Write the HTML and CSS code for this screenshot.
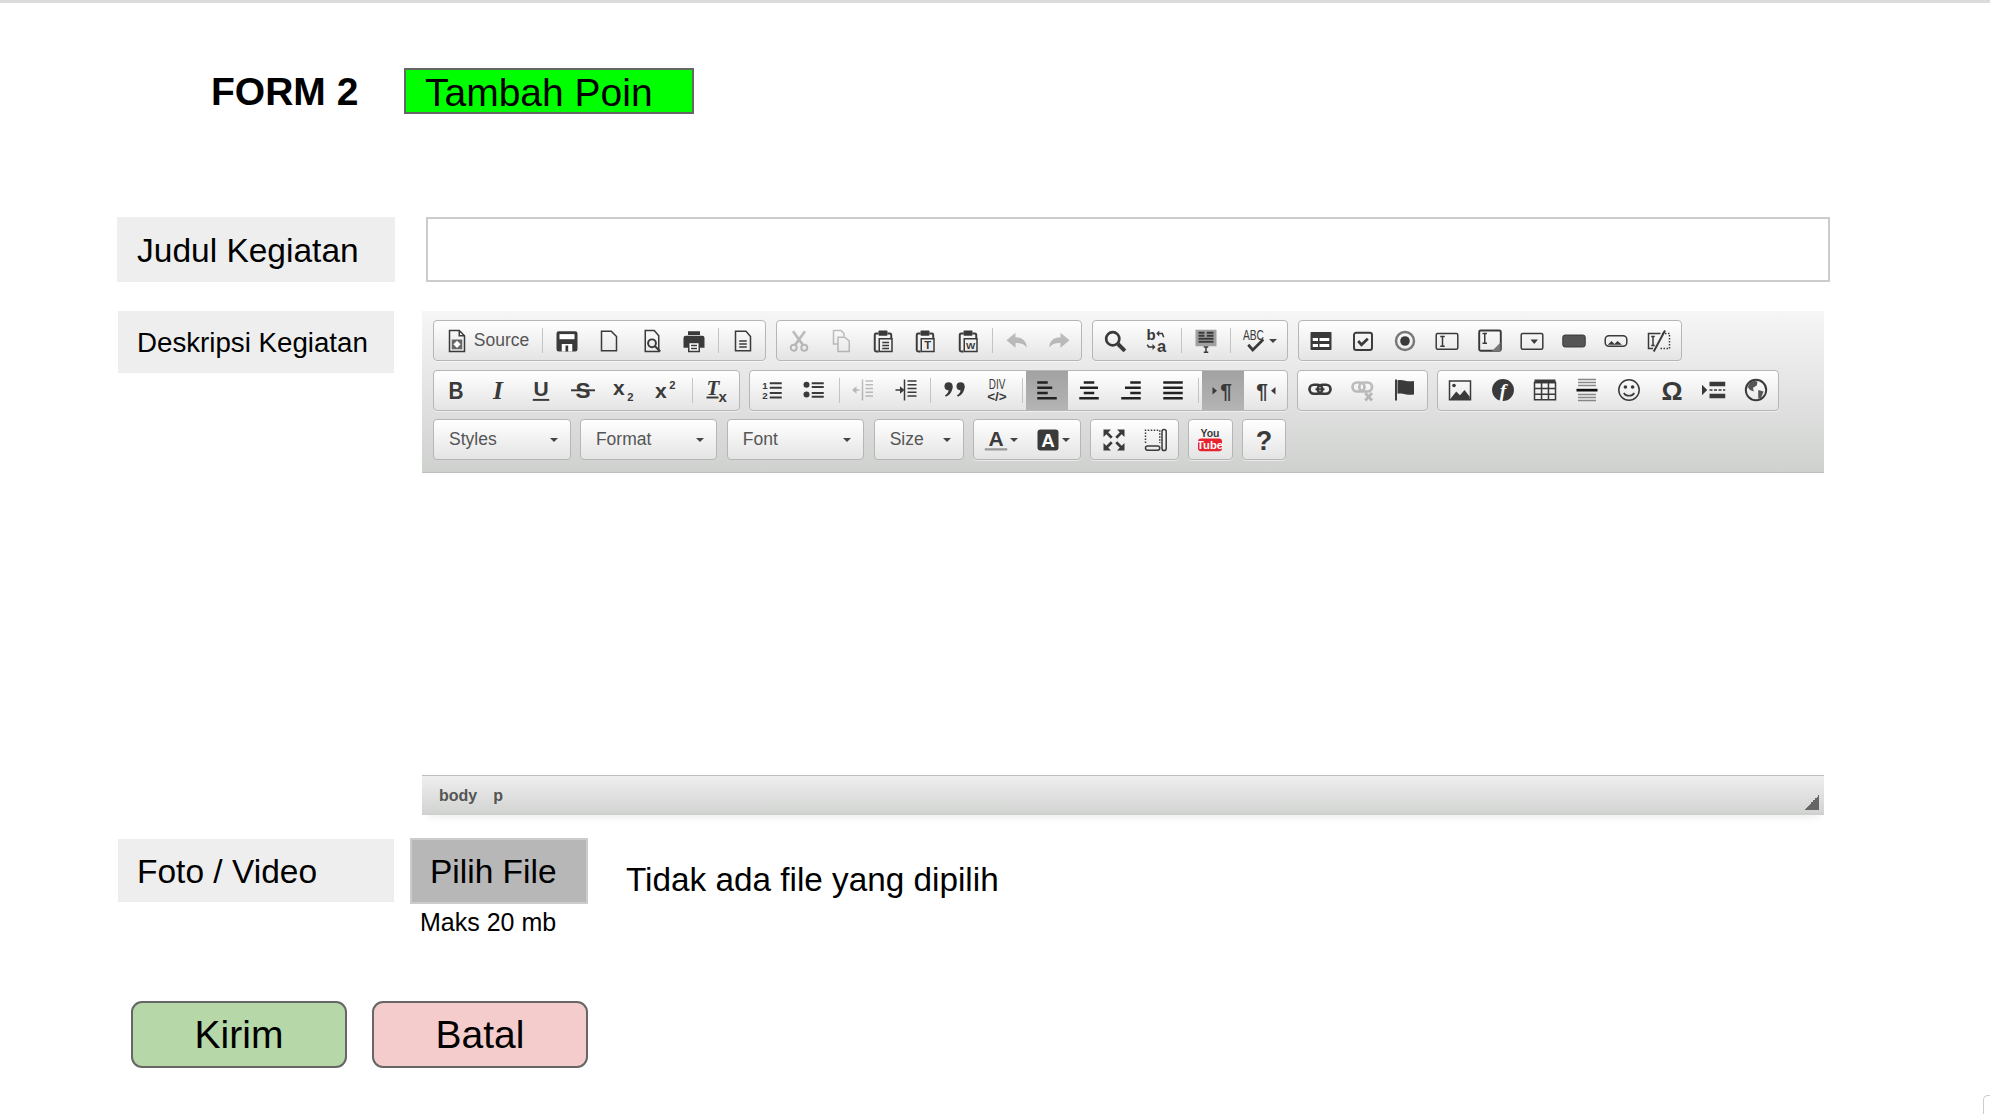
FILE: index.html

```html
<!DOCTYPE html>
<html lang="id">
<head>
<meta charset="utf-8"/>
<title>Form 2 - Tambah Poin</title>
<link rel="stylesheet" href="styles.css">
</head>
<body>

<!-- icon set for the editor toolbar, the ones with letters are written inline below -->
<svg class="defs" width="0" height="0">
  <symbol id="i-source" viewBox="0 0 16 16"><path class="ln" d="M3 1h6.500L13 4.500V15H3z"/><path class="ln" d="M9.500 1v3.500H13"/><rect x="4.500" y="7" width="7" height="6.500" fill="#666"/><path d="M8 7.800l2.400 2.400L8 12.600l-2.400-2.400z" fill="#fff"/></symbol>
  <symbol id="i-save" viewBox="0 0 16 16"><path d="M1 3a1.500 1.500 0 0 1 1.500-1.500h11A1.500 1.500 0 0 1 15 3v10.500a1.500 1.500 0 0 1-1.500 1.500h-11A1.500 1.500 0 0 1 1 13.500z"/><rect x="3" y="3.400" width="10" height="3.400" fill="#fff"/><rect x="4.500" y="10" width="7" height="5" fill="#fff"/><rect x="7" y="11" width="1.800" height="4"/></symbol>
  <symbol id="i-newpage" viewBox="0 0 16 16"><path class="ln" d="M3 1.500h6.500L13 5v9.500H3z"/></symbol>
  <symbol id="i-preview" viewBox="0 0 16 16"><path class="ln" d="M3.500 15V1h6l3 3.500V15z"/><circle class="ln2" cx="8" cy="9.500" r="2.600"/><path class="ln2" d="M10 11.500l3.500 3.500"/></symbol>
  <symbol id="i-print" viewBox="0 0 16 16"><rect x="4" y="1.500" width="8" height="2.500"/><path d="M1 6a1.500 1.500 0 0 1 1.500-1.500h11A1.500 1.500 0 0 1 15 6v6.500h-3V9H4v3.500H1z"/><rect class="ln" x="4.500" y="9" width="7" height="6" style="fill:#fff"/><path class="ln" d="M6 11h4M6 13h4"/></symbol>
  <symbol id="i-templates" viewBox="0 0 16 16"><path class="ln" d="M3 1.500h7L13 5v9.500H3z"/><path class="ln" d="M5.500 8h5M5.500 10h5M5.500 12h5"/></symbol>
  <symbol id="i-cut" viewBox="0 0 16 16"><path class="ln3" d="M4 1.500l6.500 9M12 1.500l-6.500 9"/><circle class="ln2" cx="4.500" cy="12.500" r="2"/><circle class="ln2" cx="11.500" cy="12.500" r="2"/></symbol>
  <symbol id="i-copy" viewBox="0 0 16 16"><path class="ln" d="M6 10H3V1h5l2 2v2"/><path class="ln" d="M6 5.500h4.500L13.500 8v7H6z"/></symbol>
  <symbol id="i-paste" viewBox="0 0 16 16"><path class="ln2" d="M5 3H3.500a1 1 0 0 0-1 1v10a1 1 0 0 0 1 1H5M11 3h1.500a1 1 0 0 1 1 1v2"/><rect x="5" y="1" width="6" height="3.500" rx=".6"/><rect class="ln" x="5.500" y="6.500" width="8.500" height="8.500"/><path class="ln" d="M7.500 9h4.500M7.500 11h4.500M7.500 13h4.500"/></symbol>
  <symbol id="i-undo" viewBox="0 0 16 16"><path d="M1 7.500l6-5v3c4.500 0 7.500 2.600 7.500 7-1.500-2.400-3.700-3.200-7.500-3.200v3.200z"/></symbol>
  <symbol id="i-redo" viewBox="0 0 16 16"><path d="M15 7.500l-6-5v3c-4.500 0-7.500 2.600-7.500 7 1.500-2.400 3.700-3.200 7.500-3.200v3.200z"/></symbol>
  <symbol id="i-find" viewBox="0 0 16 16"><circle class="ln3" cx="6.500" cy="6.500" r="4.400"/><path class="ln4" d="M10 10l4.600 4.600"/></symbol>
  <symbol id="i-selectall" viewBox="0 0 16 16"><rect x="1" y=".5" width="14" height="11" fill="#a0a0a0"/><path class="ln2" d="M3 2.500h4M3 4.500h4M3 6.500h10M3 8.500h10M8.500 2.500h4.500M8.500 4.500h4.500"/><path class="ln" d="M8 12v3M6.500 15.500h3M6.500 12h3"/></symbol>
  <symbol id="i-form" viewBox="0 0 16 16"><rect x="1" y="2" width="14" height="12" rx=".5"/><path d="M2.500 6h3.500v2H2.500zM7 6h6.500v2H7zM2.500 10h3.500v2H2.500zM7 10h6.500v2H7z" fill="#fff"/></symbol>
  <symbol id="i-checkbox" viewBox="0 0 16 16"><rect class="ln2" x="2" y="2.500" width="12" height="11.500" rx="1.500"/><path class="ln3" d="M4.800 8l2.200 2.500 4.200-4"/></symbol>
  <symbol id="i-radio" viewBox="0 0 16 16"><circle cx="8" cy="8" r="6" fill="none" stroke="#777" stroke-width="1.600"/><circle cx="8" cy="8" r="3.200"/></symbol>
  <symbol id="i-textfield" viewBox="0 0 16 16"><rect class="ln" x=".8" y="3" width="14.400" height="10.500" rx="1"/><path class="ln" d="M5 5v6.500M3.500 5h3M3.500 11.500h3"/></symbol>
  <symbol id="i-textarea" viewBox="0 0 16 16"><rect class="ln2" x=".8" y="1" width="14.400" height="13.500" rx="1"/><path class="ln" d="M4.500 3v6.500M3 3h3M3 9.500h3"/><path d="M15 9v6H9z" fill="#777"/></symbol>
  <symbol id="i-select" viewBox="0 0 16 16"><rect class="ln" x=".8" y="3" width="14.400" height="10.500" rx="1"/><path d="M7 7h5l-2.500 3z"/></symbol>
  <symbol id="i-button" viewBox="0 0 16 16"><rect x=".5" y="4" width="15" height="8" rx="1.500" fill="#555" stroke="#333" stroke-width=".6"/></symbol>
  <symbol id="i-imagebutton" viewBox="0 0 16 16"><rect class="ln" x=".8" y="4.500" width="14.400" height="7" rx="2.500"/><path d="M2.500 10.500L5 8l2 2 2-2 3 2.500 1.500 0z"/></symbol>
  <symbol id="i-hidden" viewBox="0 0 16 16"><path class="ln" d="M9 3H1v10h3"/><path class="ln" d="M4 5v6M2.800 5h2.400M2.800 11h2.400"/><path class="ln2" d="M4.500 15L12 1"/><path class="ln dot" d="M10 3h5v10h-7"/></symbol>
  <symbol id="i-ul" viewBox="0 0 16 16"><circle cx="3" cy="4.500" r="2"/><circle cx="3" cy="11" r="2"/><path class="ln2" d="M6.500 3.500h8M6.500 6h8M6.500 10h8M6.500 12.500h8"/></symbol>
  <symbol id="i-outdent" viewBox="0 0 16 16"><path class="ln" d="M9 2h5M9 4.500h5M9 7h5M9 9.500h5M9 12h5M7 1v14M1 8h4"/><path d="M0 8l3-2.500v5z"/></symbol>
  <symbol id="i-indent" viewBox="0 0 16 16"><path class="ln" d="M9 2h6M9 4.500h6M9 7h6M9 9.500h6M9 12h6M7 1v14M1 8h4"/><path d="M7 8L4 5.500v5z"/></symbol>
  <symbol id="i-quote" viewBox="0 0 16 16"><circle cx="3.700" cy="5.500" r="2.700"/><path d="M6.400 5.500c0 3.500-2 6-4.500 7l-.6-.9c1.500-1 2.400-2.200 2.400-3.600z"/><circle cx="11.700" cy="5.500" r="2.700"/><path d="M14.400 5.500c0 3.500-2 6-4.500 7l-.6-.9c1.500-1 2.400-2.200 2.400-3.600z"/></symbol>
  <symbol id="i-left" viewBox="0 0 16 16"><path class="bar" d="M1.500 3h7M1.500 6.500h10M1.500 10h7M1.500 13.500h13"/></symbol>
  <symbol id="i-center" viewBox="0 0 16 16"><path class="bar" d="M4.500 3h7M2 6.500h12M4.500 10h7M1.500 13.500h13"/></symbol>
  <symbol id="i-right" viewBox="0 0 16 16"><path class="bar" d="M7.500 3h7M4 6.500h10.500M7.500 10h7M1.500 13.500h13"/></symbol>
  <symbol id="i-justify" viewBox="0 0 16 16"><path class="bar" d="M1.500 3h13M1.500 6.500h13M1.500 10h13M1.500 13.500h13"/></symbol>
  <symbol id="i-link" viewBox="0 0 16 16"><rect class="ln3" x="1" y="4.500" width="8.500" height="6" rx="3"/><rect class="ln3" x="6.500" y="4.500" width="8.500" height="6" rx="3"/><path class="ln2" d="M5 7.500h6"/></symbol>
  <symbol id="i-unlink" viewBox="0 0 16 16"><rect class="ln3" x="1" y="3" width="8" height="6" rx="3"/><rect class="ln3" x="5.500" y="3" width="8.500" height="6" rx="3"/><path class="ln3" d="M9.500 10l4.500 5M14 10l-4.500 5"/></symbol>
  <symbol id="i-anchor" viewBox="0 0 16 16"><path class="ln2" d="M2 1v14"/><path d="M3 1.500c4-1 6 1.500 11 .5v9c-5 1-7-1.500-11-.5z"/></symbol>
  <symbol id="i-image" viewBox="0 0 16 16"><rect class="ln" x="1" y="2" width="14" height="12.500"/><circle cx="4" cy="5" r="1.200"/><path d="M1.500 14l4-5 2.500 2.500 3-3.500 3.500 4.500V14z"/></symbol>
  <symbol id="i-table" viewBox="0 0 16 16"><rect x="1" y="1" width="14" height="2.500"/><path class="ln" d="M1 3h14v11.500H1zM1 7h14M1 10.800h14M5.700 3v11.500M10.300 3v11.500"/></symbol>
  <symbol id="i-hr" viewBox="0 0 16 16"><path class="ln gr" d="M2 1h12M2 3h12M2 5h12M2 11h12M2 13h12M2 15h12"/><path d="M1 7.200h14v1.800H1z" fill="#111"/></symbol>
  <symbol id="i-smiley" viewBox="0 0 16 16"><circle class="ln" cx="8" cy="8" r="6.800"/><circle cx="5.600" cy="6" r="1.200"/><circle cx="10.400" cy="6" r="1.200"/><path class="ln" d="M4.500 10c1.500 2.500 5.500 2.500 7 0"/></symbol>
  <symbol id="i-pagebreak" viewBox="0 0 16 16"><path d="M0 4.500l3.500 3.500L0 11.500z"/><path d="M5 2.500h10.500v3H5zM5 10.500h10.500v3H5z"/><path class="ln dash" d="M5 8h10.500"/></symbol>
  <symbol id="i-iframe" viewBox="0 0 16 16"><circle class="ln2" cx="8" cy="8" r="6.800"/><path d="M4 3c2-1.500 4-1 5-.5L8.500 5 6 6.500 6.500 9 4 8 2.500 6zM9.500 8l3.500 1-1.500 4-2 1z" fill="#555"/></symbol>
  <symbol id="i-max" viewBox="0 0 16 16"><path class="ln3" d="M2.500 2.500l4 4M13.500 2.500l-4 4M2.500 13.500l4-4M13.500 13.500l-4-4"/><path d="M1 1h5L1 6zM15 1h-5l5 5zM1 15h5l-5-5zM15 15h-5l5-5z"/></symbol>
  <symbol id="i-blocks" viewBox="0 0 16 16"><path class="ln dot" d="M1 10V1.500h9.500V10"/><rect class="ln" x="12" y="1" width="2.800" height="14" rx="1.400"/><rect class="ln" x="1" y="12" width="9.500" height="2.800" rx="1.400"/></symbol>
</svg>

<div class="page">

  <div class="head">
    <h1>FORM 2</h1>
    <div class="poin">Tambah Poin</div>
  </div>

  <div class="row row-judul">
    <label class="lbl">Judul Kegiatan</label>
    <input class="judul" type="text"/>
  </div>

  <div class="row row-desk">
    <label class="lbl lbl-desk">Deskripsi Kegiatan</label>

    <div class="editor">
      <div class="toolbar">
        <div class="tb-row">
          <div class="grp">
            <span class="btn btn-source"><svg class="ico"><use href="#i-source"/></svg>Source</span>
            <span class="sep"></span>
            <span class="btn"><svg class="ico"><use href="#i-save"/></svg></span>
            <span class="btn"><svg class="ico"><use href="#i-newpage"/></svg></span>
            <span class="btn"><svg class="ico"><use href="#i-preview"/></svg></span>
            <span class="btn"><svg class="ico"><use href="#i-print"/></svg></span>
            <span class="sep"></span>
            <span class="btn"><svg class="ico"><use href="#i-templates"/></svg></span>
          </div>
          <div class="grp">
            <span class="btn off"><svg class="ico"><use href="#i-cut"/></svg></span>
            <span class="btn off"><svg class="ico"><use href="#i-copy"/></svg></span>
            <span class="btn"><svg class="ico"><use href="#i-paste"/></svg></span>
            <span class="btn"><svg class="ico" viewBox="0 0 16 16"><path class="ln2" d="M5 3H3.500a1 1 0 0 0-1 1v10a1 1 0 0 0 1 1H5M11 3h1.500a1 1 0 0 1 1 1v2"/><rect x="5" y="1" width="6" height="3.500" rx=".6"/><rect class="ln" x="5.500" y="6.500" width="8.500" height="8.500"/><text class="gl bd" x="9.750" y="13.600" font-size="7.500" text-anchor="middle">T</text></svg></span>
            <span class="btn"><svg class="ico" viewBox="0 0 16 16"><path class="ln2" d="M5 3H3.500a1 1 0 0 0-1 1v10a1 1 0 0 0 1 1H5M11 3h1.500a1 1 0 0 1 1 1v2"/><rect x="5" y="1" width="6" height="3.500" rx=".6"/><rect class="ln" x="5.500" y="6.500" width="8.500" height="8.500"/><text class="gl bd" x="9.750" y="13.400" font-size="6.500" text-anchor="middle">W</text></svg></span>
            <span class="sep"></span>
            <span class="btn off"><svg class="ico"><use href="#i-undo"/></svg></span>
            <span class="btn off"><svg class="ico"><use href="#i-redo"/></svg></span>
          </div>
          <div class="grp">
            <span class="btn"><svg class="ico"><use href="#i-find"/></svg></span>
            <span class="btn"><svg class="ico" viewBox="0 0 16 16"><text class="gl bd" x="1" y="7.500" font-size="10">b</text><text class="gl bd" x="8" y="15.600" font-size="11">a</text><path class="ln" d="M8 3h3.500l1 2.500"/><path d="M9.500 1l-2 2 2 2z"/><path class="ln" d="M1.500 10.500l1 1.500H6"/><path d="M5 10l2 2-2 2z"/></svg></span>
            <span class="sep"></span>
            <span class="btn"><svg class="ico"><use href="#i-selectall"/></svg></span>
            <span class="sep"></span>
            <span class="btn btn-arrow"><svg class="ico" viewBox="0 0 16 16"><text class="gl" x="0" y="7.500" font-size="9.500" textLength="14" lengthAdjust="spacingAndGlyphs">ABC</text><path class="ln3" d="M3.500 10.500l3 3.500 7-7"/></svg><i class="caret"></i></span>
          </div>
          <div class="grp">
            <span class="btn"><svg class="ico"><use href="#i-form"/></svg></span>
            <span class="btn"><svg class="ico"><use href="#i-checkbox"/></svg></span>
            <span class="btn"><svg class="ico"><use href="#i-radio"/></svg></span>
            <span class="btn"><svg class="ico"><use href="#i-textfield"/></svg></span>
            <span class="btn"><svg class="ico"><use href="#i-textarea"/></svg></span>
            <span class="btn"><svg class="ico"><use href="#i-select"/></svg></span>
            <span class="btn"><svg class="ico"><use href="#i-button"/></svg></span>
            <span class="btn"><svg class="ico"><use href="#i-imagebutton"/></svg></span>
            <span class="btn"><svg class="ico"><use href="#i-hidden"/></svg></span>
          </div>
        </div>

        <div class="tb-row">
          <div class="grp">
            <span class="btn"><svg class="ico" viewBox="0 0 16 16"><text class="gl bd" x="8" y="14" font-size="16.500" text-anchor="middle" textLength="10" lengthAdjust="spacingAndGlyphs">B</text></svg></span>
            <span class="btn"><svg class="ico" viewBox="0 0 16 16"><text class="gl sf" x="8" y="14" font-size="17" text-anchor="middle">I</text></svg></span>
            <span class="btn"><svg class="ico" viewBox="0 0 16 16"><text class="gl bd" x="8" y="12" font-size="14" text-anchor="middle">U</text><path class="ln2" d="M2.500 14.600h11"/></svg></span>
            <span class="btn"><svg class="ico" viewBox="0 0 16 16"><text class="gl bd" x="8" y="13.500" font-size="15" text-anchor="middle">S</text><path class="ln2" d="M0 8.200h16"/></svg></span>
            <span class="btn"><svg class="ico" viewBox="0 0 16 16"><text class="gl bd" x="0" y="11.500" font-size="14">x</text><text class="gl bd" x="9.500" y="15" font-size="7.500">2</text></svg></span>
            <span class="btn"><svg class="ico" viewBox="0 0 16 16"><text class="gl bd" x="0" y="13.500" font-size="14">x</text><text class="gl bd" x="9.500" y="7" font-size="7.500">2</text></svg></span>
            <span class="sep"></span>
            <span class="btn"><svg class="ico" viewBox="0 0 16 16"><text class="gl sf" x="1" y="11.500" font-size="14">T</text><path class="ln2" d="M1 13h8"/><text class="gl bd" x="9" y="16" font-size="10">x</text></svg></span>
          </div>
          <div class="grp">
            <span class="btn"><svg class="ico" viewBox="0 0 16 16"><text class="gl bd" x="1.500" y="7" font-size="6.500">1</text><text class="gl bd" x="1.500" y="14" font-size="6.500">2</text><path class="ln2" d="M6.500 3.500h8M6.500 6.500h8M6.500 10h8M6.500 13h8"/></svg></span>
            <span class="btn"><svg class="ico"><use href="#i-ul"/></svg></span>
            <span class="sep"></span>
            <span class="btn off"><svg class="ico"><use href="#i-outdent"/></svg></span>
            <span class="btn"><svg class="ico"><use href="#i-indent"/></svg></span>
            <span class="sep"></span>
            <span class="btn"><svg class="ico"><use href="#i-quote"/></svg></span>
            <span class="btn"><svg class="ico" viewBox="0 0 16 16"><text class="gl" x="8" y="7.500" font-size="9.500" text-anchor="middle" textLength="11" lengthAdjust="spacingAndGlyphs">DIV</text><text class="gl bd" x="8" y="15" font-size="8" text-anchor="middle" textLength="13" lengthAdjust="spacingAndGlyphs">&lt;/&gt;</text></svg></span>
            <span class="sep"></span>
            <span class="btn on"><svg class="ico"><use href="#i-left"/></svg></span>
            <span class="btn"><svg class="ico"><use href="#i-center"/></svg></span>
            <span class="btn"><svg class="ico"><use href="#i-right"/></svg></span>
            <span class="btn"><svg class="ico"><use href="#i-justify"/></svg></span>
            <span class="sep"></span>
            <span class="btn on"><svg class="ico" viewBox="0 0 16 16"><path d="M1 6l3 2.500L1 11z"/><text class="gl bd" x="10" y="13.500" font-size="14" text-anchor="middle">¶</text></svg></span>
            <span class="btn"><svg class="ico" viewBox="0 0 16 16"><path d="M15 6l-3 2.500L15 11z"/><text class="gl bd" x="6" y="13.500" font-size="14" text-anchor="middle">¶</text></svg></span>
          </div>
          <div class="grp">
            <span class="btn"><svg class="ico"><use href="#i-link"/></svg></span>
            <span class="btn off"><svg class="ico"><use href="#i-unlink"/></svg></span>
            <span class="btn"><svg class="ico"><use href="#i-anchor"/></svg></span>
          </div>
          <div class="grp">
            <span class="btn"><svg class="ico"><use href="#i-image"/></svg></span>
            <span class="btn"><svg class="ico" viewBox="0 0 16 16"><circle cx="8" cy="8" r="7.300"/><text class="gl sf wh" x="8" y="12.500" font-size="13" text-anchor="middle">f</text></svg></span>
            <span class="btn"><svg class="ico"><use href="#i-table"/></svg></span>
            <span class="btn"><svg class="ico"><use href="#i-hr"/></svg></span>
            <span class="btn"><svg class="ico"><use href="#i-smiley"/></svg></span>
            <span class="btn"><svg class="ico" viewBox="0 0 16 16"><text class="gl bd" x="8" y="14.500" font-size="17.500" text-anchor="middle">Ω</text></svg></span>
            <span class="btn"><svg class="ico"><use href="#i-pagebreak"/></svg></span>
            <span class="btn"><svg class="ico"><use href="#i-iframe"/></svg></span>
          </div>
        </div>

        <div class="tb-row tb-row-last">
          <div class="combo combo-lg">Styles<i class="caret"></i></div>
          <div class="combo combo-lg">Format<i class="caret"></i></div>
          <div class="combo combo-lg">Font<i class="caret"></i></div>
          <div class="combo combo-sm">Size<i class="caret"></i></div>
          <div class="grp">
            <span class="btn btn-arrow"><svg class="ico" viewBox="0 0 16 16"><text class="gl bd" x="8" y="12" font-size="14" text-anchor="middle">A</text><path d="M.5 13.500h15v1.500H.5z" fill="#999"/></svg><i class="caret"></i></span>
            <span class="btn btn-arrow"><svg class="ico" viewBox="0 0 16 16"><rect x="1" y="1" width="14" height="14" rx="2"/><text class="gl bd wh" x="8" y="12.500" font-size="12.500" text-anchor="middle">A</text></svg><i class="caret"></i></span>
          </div>
          <div class="grp">
            <span class="btn"><svg class="ico"><use href="#i-max"/></svg></span>
            <span class="btn"><svg class="ico"><use href="#i-blocks"/></svg></span>
          </div>
          <div class="grp grp-one">
            <span class="btn"><svg class="ico" viewBox="0 0 16 16"><text class="gl bd" x="8" y="6" font-size="7" text-anchor="middle">You</text><rect x="0" y="7" width="16" height="8.500" rx="2" fill="#e8222e"/><text class="gl bd wh" x="8" y="13.800" font-size="7.500" text-anchor="middle">Tube</text></svg></span>
          </div>
          <div class="grp grp-one">
            <span class="btn"><svg class="ico" viewBox="0 0 16 16"><text class="gl bd" x="8" y="14.500" font-size="18" text-anchor="middle">?</text></svg></span>
          </div>
        </div>
      </div>

      <div class="content"></div>

      <div class="status">
        <span>body</span><span>p</span>
        <i class="grip"></i>
      </div>
    </div>
  </div>

  <div class="row row-foto">
    <label class="lbl lbl-foto">Foto / Video</label>
    <div class="file-col">
      <button class="pilih" type="button">Pilih File</button>
      <div class="maks">Maks 20 mb</div>
    </div>
    <div class="file-name">Tidak ada file yang dipilih</div>
  </div>

  <div class="actions">
    <button class="act kirim" type="button">Kirim</button>
    <button class="act batal" type="button">Batal</button>
  </div>

</div>

<div class="corner"></div>

</body>
</html>
```

FILE: styles.css

```css
html, body {
    margin: 0;
    height: 1114px;
    overflow: hidden;
    background-color: #fff;
}

body {
    color: #000;
    font-family: "Liberation Sans", Arial, sans-serif;
}

.defs {
    position: absolute;
}

.page {
    border-top: 3px solid #dcdcdc;
    padding-left: 117px;
}

/* header */
.head {
    display: flex;
    align-items: flex-start;
    height: 46px;
    padding-top: 65px;
}

.head h1 {
    margin: 0 0 0 94px;
    padding-top: 2px;
    width: 193px;
    font-size: 39px;
    font-weight: bold;
    line-height: 44px;
}

.poin {
    box-sizing: border-box;
    width: 290px;
    height: 46px;
    padding: 3px 0 0 19px;
    background-color: #00ff00;
    border: 2px solid #666;
    font-size: 39px;
    line-height: 39px;
}

/* form rows */
.row {
    display: flex;
    align-items: flex-start;
}

.row-judul {
    margin-top: 103px;
}

.row-desk {
    margin-top: 29px;
}

.row-foto {
    margin-top: 23px;
}

.lbl {
    box-sizing: border-box;
    display: flex;
    align-items: center;
    width: 278px;
    height: 65px;
    padding: 2px 0 0 20px;
    background-color: #eee;
    font-size: 33.5px;
}

.judul {
    box-sizing: border-box;
    width: 1404px;
    height: 65px;
    margin-left: 31px;
    border: 2px solid #ccc;
    background-color: #fff;
}

.lbl-desk {
    width: 276px;
    height: 62px;
    margin-left: 1px;
    padding-left: 19px;
    font-size: 27.7px;
}

.lbl-foto {
    width: 276px;
    height: 63px;
    margin: 1px 0 0 1px;
    padding-left: 19px;
}

/* editor */
.editor {
    width: 1402px;
    margin-left: 28px;
    box-shadow: 0 8px 8px -6px rgba(0,0,0,0.08);
}

.toolbar {
    box-sizing: border-box;
    height: 162px;
    padding: 9px 0 0 11px;
    background: linear-gradient(#f6f6f6, #cfd1cf);
    border-bottom: 1px solid #bfbfbf;
}

.tb-row {
    display: flex;
    gap: 9.25px;
    height: 41px;
    margin-bottom: 8.5px;
}

.tb-row-last {
    gap: 9.4px;
}

.grp {
    display: flex;
    align-items: stretch;
    padding: 0 1px;
    background: linear-gradient(#fff, #e4e4e4);
    border: 1px solid #b6b6b6;
    border-radius: 4px;
    box-shadow: 0 1px 0 rgba(255,255,255,0.5);
}

.grp-one {
    padding: 0;
}

.btn {
    display: flex;
    align-items: center;
    justify-content: center;
    flex: none;
    width: 42.25px;
}

.btn.off .ico {
    opacity: 0.3;
}

.btn.on {
    background-color: #a9a9a9;
    background-image: linear-gradient(#a2a2a2, #b4b4b4);
}

.btn-source {
    width: 104px;
    gap: 5px;
    color: #555;
    font-size: 17.5px;
}

.btn-arrow {
    width: 52px;
    gap: 2px;
}

.sep {
    flex: none;
    width: 1px;
    margin: 7px 3px;
    background-color: #c4c4c4;
}

.caret {
    flex: none;
    width: 0;
    height: 0;
    border-left: 4px solid transparent;
    border-right: 4px solid transparent;
    border-top: 4px solid #444;
}

.combo {
    box-sizing: border-box;
    display: flex;
    align-items: center;
    justify-content: space-between;
    padding: 0 12px 0 15px;
    color: #555;
    font-size: 17.5px;
    background: linear-gradient(#fff, #e4e4e4);
    border: 1px solid #b6b6b6;
    border-radius: 4px;
}

.combo-lg {
    width: 137.5px;
}

.combo-sm {
    width: 90px;
}

/* icons */
.ico {
    width: 24px;
    height: 24px;
    fill: #3a3a3a;
    flex: none;
    overflow: visible;
}

.ln, .ln2, .ln3, .ln4, .bar {
    fill: none;
    stroke: #3a3a3a;
}

.ln { stroke-width: 1; }
.ln2 { stroke-width: 1.3; }
.ln3 { stroke-width: 1.8; }
.ln4 { stroke-width: 2.6; }
.bar { stroke: #222; stroke-width: 1.6; }
.gr { stroke: #888; }
.dot { stroke-dasharray: 1 1; }
.dash { stroke-dasharray: 2 1; }

.gl {
    font-family: "Liberation Sans", Arial, sans-serif;
    fill: #3a3a3a;
}

.gl.bd {
    font-weight: bold;
}

.gl.sf {
    font-family: "Liberation Serif", serif;
    font-style: italic;
    font-weight: bold;
}

.gl.wh {
    fill: #fff;
}

.content {
    height: 302px;
    background-color: #fff;
}

.status {
    position: relative;
    box-sizing: border-box;
    display: flex;
    align-items: center;
    gap: 16px;
    height: 40px;
    padding: 2px 0 0 17px;
    background: linear-gradient(#eeeeee, #d2d4d2);
    border-top: 1px solid #bdbdbd;
    border-bottom: 2px solid #cfcfcf;
    color: #555;
    font-size: 16px;
    font-weight: bold;
}

.grip {
    position: absolute;
    right: 5px;
    bottom: 3px;
    width: 15px;
    height: 15px;
    background: linear-gradient(135deg, transparent 50%, #666 50%);
}

/* file picker */
.file-col {
    width: 178px;
    margin-left: 16px;
}

.pilih {
    display: block;
    box-sizing: border-box;
    width: 178px;
    height: 66px;
    padding: 2px 0 0 18px;
    background-color: #b7b7b7;
    border: 2px solid #ccc;
    font-family: "Liberation Sans", Arial, sans-serif;
    font-size: 33.5px;
    text-align: left;
}

.maks {
    margin: 4px 0 0 10px;
    font-size: 25px;
    white-space: nowrap;
}

.file-name {
    margin: 23px 0 0 38px;
    font-size: 33.3px;
}

/* buttons */
.actions {
    display: flex;
    gap: 25px;
    margin: 64px 0 0 14px;
}

.act {
    box-sizing: border-box;
    width: 216px;
    height: 67px;
    padding-top: 2px;
    border: 2px solid #666;
    border-radius: 11px;
    font-family: "Liberation Sans", Arial, sans-serif;
    font-size: 39px;
    color: #000;
}

.kirim {
    background-color: #b6d7a8;
}

.batal {
    background-color: #f4cccc;
}

.corner {
    position: absolute;
    right: 0;
    top: 1095px;
    width: 6px;
    height: 19px;
    background-color: #fff;
    border: 1px solid #ccc;
    border-right: none;
    border-bottom: none;
    border-top-left-radius: 5px;
}
```
